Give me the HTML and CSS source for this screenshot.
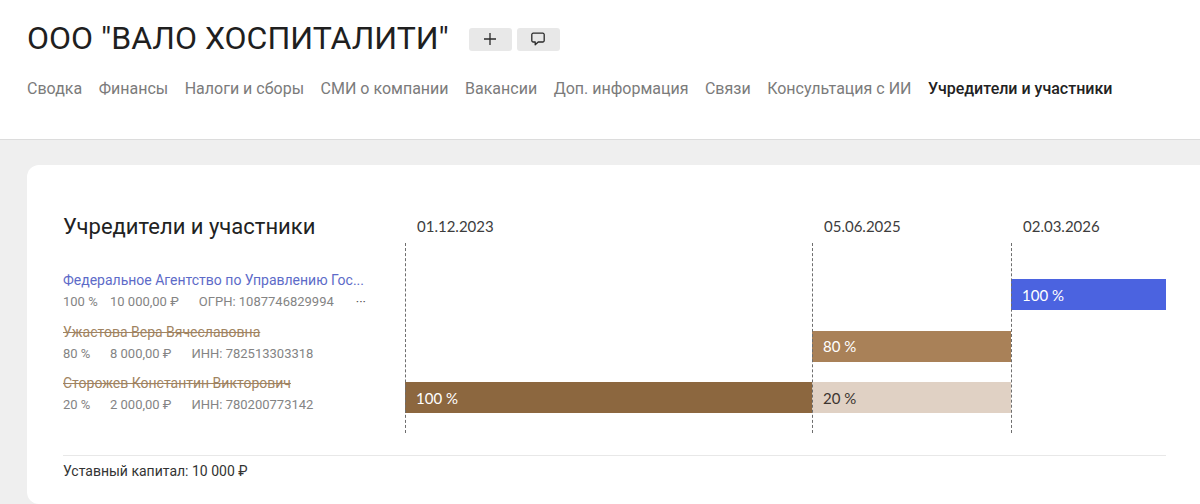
FILE: index.html
```html
<!DOCTYPE html>
<html lang="ru">
<head>
  <meta charset="UTF-8">
  <meta name="viewport" content="width=device-width, initial-scale=1.0">
  <title>ООО "ВАЛО ХОСПИТАЛИТИ"</title>
  <link rel="stylesheet" href="styles.css">
</head>
<body>

  <header class="page-header">
    <div class="title-row">
      <h1>ООО "ВАЛО ХОСПИТАЛИТИ"</h1>
      <div class="title-actions">
        <button class="icon-button" type="button" aria-label="Добавить">
          <svg width="14" height="14" viewBox="0 0 14 14"><path d="M7 1v12M1 7h12" fill="none" stroke="#2a2a2a" stroke-width="1.3"/></svg>
        </button>
        <button class="icon-button" type="button" aria-label="Комментарий">
          <svg width="16" height="16" viewBox="0 0 16 16"><path d="M3.2 2.2h9.6a1.4 1.4 0 0 1 1.4 1.4v6a1.4 1.4 0 0 1-1.4 1.4H8.2l-3 2.8V11h-2a1.4 1.4 0 0 1-1.4-1.4v-6a1.4 1.4 0 0 1 1.4-1.4z" fill="none" stroke="#2a2a2a" stroke-width="1.3" stroke-linejoin="round"/></svg>
        </button>
      </div>
    </div>
    <nav class="tabs">
      <a href="#">Сводка</a>
      <a href="#">Финансы</a>
      <a href="#">Налоги и сборы</a>
      <a href="#">СМИ о компании</a>
      <a href="#">Вакансии</a>
      <a href="#">Доп. информация</a>
      <a href="#">Связи</a>
      <a href="#">Консультация с ИИ</a>
      <a href="#" class="active">Учредители и участники</a>
    </nav>
  </header>

  <main class="content">
    <section class="card">
      <div class="founders">
        <div class="founders-list">
          <h2>Учредители и участники</h2>

          <div class="founder">
            <a href="#" class="founder-name current">Федеральное Агентство по Управлению Гос...</a>
            <div class="founder-meta">
              <span class="share">100 %</span>
              <span class="sum">10 000,00 ₽</span>
              <span>ОГРН: 1087746829994</span>
              <span class="more">···</span>
            </div>
          </div>

          <div class="founder">
            <a href="#" class="founder-name former">Ужастова Вера Вячеславовна</a>
            <div class="founder-meta">
              <span class="share">80 %</span>
              <span class="sum">8 000,00 ₽</span>
              <span>ИНН: 782513303318</span>
            </div>
          </div>

          <div class="founder">
            <a href="#" class="founder-name former">Сторожев Константин Викторович</a>
            <div class="founder-meta">
              <span class="share">20 %</span>
              <span class="sum">2 000,00 ₽</span>
              <span>ИНН: 780200773142</span>
            </div>
          </div>
        </div>

        <div class="timeline">
          <div class="dates">
            <span class="date-first">01.12.2023</span>
            <span class="date-second">05.06.2025</span>
            <span class="date-third">02.03.2026</span>
          </div>
          <div class="chart">
            <i class="line line-1"></i>
            <i class="line line-2"></i>
            <i class="line line-3"></i>
            <div class="bar bar-blue">100 %</div>
            <div class="bar bar-mid">80 %</div>
            <div class="bar bar-dark">100 %</div>
            <div class="bar bar-light">20 %</div>
          </div>
        </div>
      </div>

      <div class="capital">Уставный капитал: 10 000 ₽</div>
    </section>
  </main>

</body>
</html>
```

FILE: styles.css
```css
* {
  box-sizing: border-box;
}

body {
  font-family: Roboto, "Noto Sans", sans-serif;
  background-color: #efefef;
  color: #222;
  margin: 0;
  height: 504px;
  overflow: hidden;
}

a {
  text-decoration: none;
}

.page-header {
  background-color: #fff;
  height: 140px;
  border-bottom: 1px solid #dcdcdc;
  padding: 19px 27px 0;
}

.title-row {
  display: flex;
  align-items: center;
  gap: 20px;
}

h1 {
  font-size: 32px;
  line-height: 38px;
  font-weight: 400;
  margin: 0;
  color: #1f1f1f;
}

.title-actions {
  display: flex;
  gap: 5px;
  margin-top: 2px;
}

.icon-button {
  width: 43px;
  height: 23px;
  border: none;
  border-radius: 3px;
  background-color: #e8e8e8;
  padding: 0;
  display: flex;
  align-items: center;
  justify-content: center;
}

.tabs {
  display: flex;
  gap: 16.5px;
  margin-top: 22px;
  font-size: 16px;
  line-height: 20px;
}

.tabs a {
  color: #7b7b7b;
}

.tabs a.active {
  color: #222;
  font-weight: 500;
}

.content {
  padding: 25px 0 0 27px;
}

.card {
  background-color: #fff;
  border-radius: 12px 0 0 12px;
  height: 339px;
  padding: 36px 34px 0 36px;
}

.founders {
  display: flex;
}

.founders-list {
  width: 342px;
  flex: none;
}

h2 {
  font-size: 22px;
  line-height: 28px;
  font-weight: 400;
  margin: 12px 0 29px;
  color: #222;
}

.founder {
  height: 51.5px;
}

.founder-name {
  display: block;
  font-size: 14px;
  line-height: 20px;
}

.founder-name.current {
  color: #5d6bc8;
}

.founder-name.former {
  color: #a08361;
  text-decoration: line-through;
}

.founder-meta {
  display: flex;
  gap: 20px;
  margin-top: 3px;
  font-size: 13px;
  line-height: 18px;
  color: #848484;
}

.founder-meta .share {
  width: 27px;
  white-space: nowrap;
}

.more {
  margin-left: 2px;
  color: #555;
}

.timeline {
  flex: 1;
}

.dates {
  display: grid;
  grid-template-columns: 407px 199px 155px;
  height: 42px;
  padding-top: 15px;
  font-family: Lato, Roboto, sans-serif;
  font-size: 15px;
  line-height: 20px;
  color: #3d3d3d;
}

.date-first {
  padding-left: 12px;
}

.date-second {
  padding-left: 12px;
}

.date-third {
  padding-left: 12px;
}

.chart {
  display: grid;
  grid-template-columns: 407px 199px 155px;
  grid-template-rows: 31px 31px 31px;
  row-gap: 20.5px;
  padding: 36px 0 20px;
  font-family: Lato, Roboto, sans-serif;
  font-size: 15px;
}

.line {
  grid-row: 1 / 4;
  margin: -36px 0 -20px;
  border-left: 1px dashed #6e6e6e;
  z-index: 1;
}

.line-1 {
  grid-column: 1;
}

.line-2 {
  grid-column: 2;
}

.line-3 {
  grid-column: 3;
}

.bar {
  display: flex;
  align-items: center;
  padding-left: 11px;
  color: #fff;
}

.bar-blue {
  grid-column: 3;
  grid-row: 1;
  background-color: #4b63e0;
}

.bar-mid {
  grid-column: 2;
  grid-row: 2;
  background-color: #a98158;
}

.bar-dark {
  grid-column: 1;
  grid-row: 3;
  background-color: #8c673f;
}

.bar-light {
  grid-column: 2;
  grid-row: 3;
  background-color: #e0d1c4;
  color: #3d3530;
}

.capital {
  margin-top: 22px;
  border-top: 1px solid #e8e8e8;
  padding-top: 5px;
  font-size: 14px;
  line-height: 20px;
  color: #333;
}
```
